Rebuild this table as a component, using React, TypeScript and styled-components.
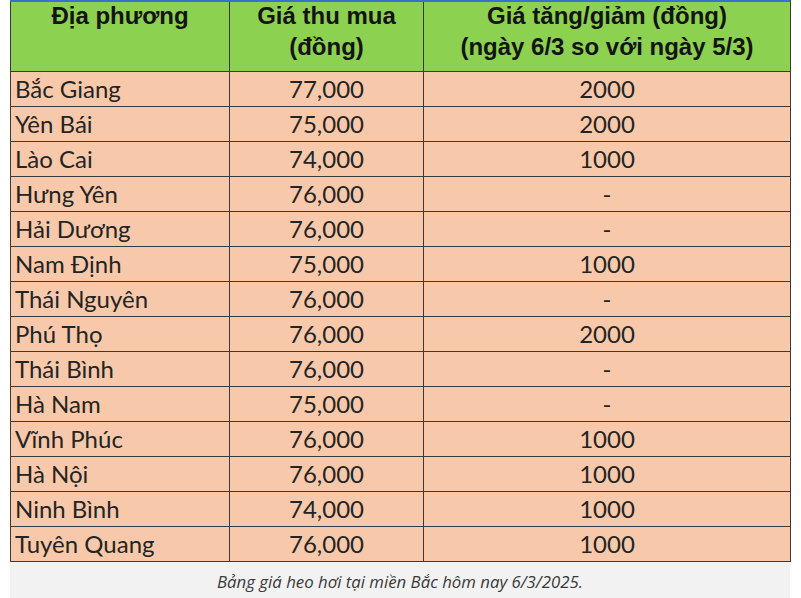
import React from "react";
import styled, { createGlobalStyle } from "styled-components";

const Global = createGlobalStyle`
  html, body { margin: 0; padding: 0; background: #ffffff; }
  body { width: 801px; height: 598px; overflow: hidden; }
`;

const Page = styled.div`
  padding: 0 12px 0 10px;
  width: 801px;
  box-sizing: border-box;
`;

const Figure = styled.figure`
  position: relative;
  margin: 0;
  width: 780px;

  &::before {
    content: "";
    position: absolute;
    left: 0;
    right: 0;
    top: 0;
    height: 2px;
    background: #3b6fd0;
  }
`;

const Table = styled.table`
  border-collapse: collapse;
  width: 780px;
  table-layout: fixed;
`;

const HeadCell = styled.th`
  background: #8dd150;
  color: #141414;
  font-family: "Liberation Sans", Arial, sans-serif;
  font-weight: bold;
  font-size: 24px;
  line-height: 31px;
  height: 71px;
  padding: 0 2px;
  vertical-align: top;
  text-align: center;
  white-space: nowrap;
  border: 1px solid #3a3a3a;
  border-top: none;
`;

const Cell = styled.td<{ $align?: "left" | "center" }>`
  background: #f7c9aa;
  color: #242424;
  font-family: Lato, "Noto Sans", sans-serif;
  font-size: 24px;
  height: 34px;
  line-height: 34px;
  padding: 0 4px;
  text-align: ${(p) => p.$align ?? "center"};
  border: 1px solid #3a3a3a;
  white-space: nowrap;
`;

const Caption = styled.figcaption`
  background: #f2f2f2;
  color: #3a3a3a;
  font-family: "Open Sans", "Noto Sans", sans-serif;
  font-style: italic;
  font-size: 16.8px;
  height: 36px;
  line-height: 40px;
  text-align: center;
`;

const rows: [string, string, string][] = [
  ["Bắc Giang", "77,000", "2000"],
  ["Yên Bái", "75,000", "2000"],
  ["Lào Cai", "74,000", "1000"],
  ["Hưng Yên", "76,000", "-"],
  ["Hải Dương", "76,000", "-"],
  ["Nam Định", "75,000", "1000"],
  ["Thái Nguyên", "76,000", "-"],
  ["Phú Thọ", "76,000", "2000"],
  ["Thái Bình", "76,000", "-"],
  ["Hà Nam", "75,000", "-"],
  ["Vĩnh Phúc", "76,000", "1000"],
  ["Hà Nội", "76,000", "1000"],
  ["Ninh Bình", "74,000", "1000"],
  ["Tuyên Quang", "76,000", "1000"],
];

export default function App() {
  return (
    <>
      <Global />
      <Page>
        <Figure>
          <Table>
            <colgroup>
              <col style={{ width: 219 }} />
              <col style={{ width: 194 }} />
              <col style={{ width: 367 }} />
            </colgroup>
            <thead>
              <tr>
                <HeadCell>Địa phương</HeadCell>
                <HeadCell>
                  Giá thu mua
                  <br />
                  (đồng)
                </HeadCell>
                <HeadCell>
                  Giá tăng/giảm (đồng)
                  <br />
                  (ngày 6/3 so với ngày 5/3)
                </HeadCell>
              </tr>
            </thead>
            <tbody>
              {rows.map(([place, price, delta]) => (
                <tr key={place}>
                  <Cell $align="left">{place}</Cell>
                  <Cell>{price}</Cell>
                  <Cell>{delta}</Cell>
                </tr>
              ))}
            </tbody>
          </Table>
          <Caption>Bảng giá heo hơi tại miền Bắc hôm nay 6/3/2025.</Caption>
        </Figure>
      </Page>
    </>
  );
}
